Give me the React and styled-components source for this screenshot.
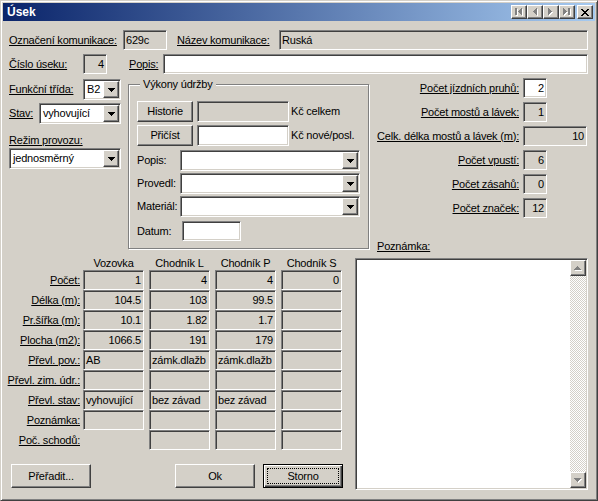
import React from 'react';
import styled, { createGlobalStyle, css } from 'styled-components';

const FACE = '#d4d0c8';
const SHADOW = '#808080';
const DARK = '#404040';

const GlobalStyle = createGlobalStyle`
  * { box-sizing: border-box; }
  html, body { margin: 0; padding: 0; background: ${FACE}; }
  body {
    font-family: "Liberation Sans", Arial, sans-serif;
    font-size: 11px;
    line-height: 13px;
    letter-spacing: -0.2px;
    color: #000;
  }
`;

const sunken = css`
  border: 1px solid;
  border-color: ${SHADOW} #fff #fff ${SHADOW};
  box-shadow: inset 1px 1px ${DARK}, inset -1px -1px ${FACE};
`;

const raised = css`
  border: 1px solid;
  border-color: #fff ${DARK} ${DARK} #fff;
  box-shadow: inset -1px -1px ${SHADOW};
`;

const Window = styled.div`
  width: 598px;
  height: 501px;
  background: ${FACE};
  border: 1px solid;
  border-color: ${FACE} ${DARK} ${DARK} ${FACE};
  box-shadow: inset 1px 1px #fff, inset -1px -1px ${SHADOW};
  padding: 2px;
  display: flex;
  flex-direction: column;
`;

const TitleBar = styled.div`
  height: 18px;
  flex: none;
  display: flex;
  align-items: center;
  padding: 0 2px;
  background: linear-gradient(to right, #0a246a, #a6caf0);
`;

const Title = styled.span`
  flex: 1;
  color: #fff;
  font-weight: bold;
  font-size: 12px;
  letter-spacing: 0;
  padding-left: 2px;
`;

const TitleButton = styled.span`
  ${raised};
  width: 16px;
  height: 14px;
  background: ${FACE};
  display: flex;
  align-items: center;
  justify-content: center;
  margin-left: ${(p) => p.$gap || 0}px;
`;

const Body = styled.div`
  flex: 1;
  display: flex;
  flex-direction: column;
  padding: 9px 7px 8px 6px;
  min-height: 0;
`;

const Row = styled.div`
  display: flex;
  align-items: center;
  flex: none;
  height: ${(p) => p.$h || 20}px;
  margin-top: ${(p) => p.$mt || 0}px;
`;

const Label = styled.span`
  flex: none;
  display: ${(p) => (p.$block ? 'block' : 'inline')};
  width: ${(p) => (p.$w ? `${p.$w}px` : 'auto')};
  margin-left: ${(p) => p.$ml || 0}px;
  margin-top: ${(p) => p.$mt || 0}px;
  text-decoration: ${(p) => (p.$u ? 'underline' : 'none')};
  white-space: nowrap;
`;

const Field = styled.div`
  ${sunken};
  flex: ${(p) => (p.$grow ? '1' : 'none')};
  width: ${(p) => (p.$w ? `${p.$w}px` : 'auto')};
  height: ${(p) => p.$h || 20}px;
  margin-left: ${(p) => p.$ml || 0}px;
  background: ${(p) => (p.$white ? '#fff' : FACE)};
  display: flex;
  align-items: center;
  justify-content: ${(p) => (p.$right ? 'flex-end' : 'flex-start')};
  padding: 0 2px;
  white-space: nowrap;
  overflow: hidden;
`;

const Combo = styled.div`
  ${sunken};
  flex: none;
  width: ${(p) => (p.$w ? `${p.$w}px` : '100%')};
  height: ${(p) => p.$h || 21}px;
  margin-top: ${(p) => p.$mt || 0}px;
  background: #fff;
  padding: 1px;
  display: flex;
`;

const ComboText = styled.span`
  flex: 1;
  display: flex;
  align-items: center;
  padding-left: 2px;
  overflow: hidden;
  white-space: nowrap;
`;

const DropButton = styled.span`
  ${raised};
  width: 16px;
  flex: none;
  background: ${FACE};
  display: flex;
  align-items: center;
  justify-content: center;
`;

const Button = styled.div`
  ${raised};
  flex: none;
  width: ${(p) => p.$w || 80}px;
  height: ${(p) => p.$h || 24}px;
  margin-left: ${(p) => (p.$auto ? 'auto' : `${p.$ml || 0}px`)};
  background: ${FACE};
  display: flex;
  align-items: center;
  justify-content: center;
  white-space: nowrap;
`;

const DefaultButton = styled.div`
  flex: none;
  width: 80px;
  height: 24px;
  margin-left: ${(p) => p.$ml || 0}px;
  background: ${FACE};
  border: 1px solid #000;
  box-shadow: inset 1px 1px #fff, inset -1px -1px ${DARK}, inset -2px -2px ${SHADOW};
  padding: 3px;
  display: flex;
`;

const FocusRect = styled.span`
  flex: 1;
  border: 1px dotted #000;
  display: flex;
  align-items: center;
  justify-content: center;
`;

const Middle = styled.div`
  display: flex;
  align-items: flex-start;
  height: 175px;
  flex: none;
  margin-top: 4px;
`;

const LeftCol = styled.div`
  width: 112px;
  flex: none;
  display: flex;
  flex-direction: column;
`;

const GroupBox = styled.div`
  position: relative;
  flex: none;
  width: 241px;
  height: 165px;
  margin: 6px 0 0 7px;
  border: 1px solid ${SHADOW};
  box-shadow: inset 1px 1px #fff, 1px 1px #fff;
  padding: 16px 8px 0 8px;
  display: flex;
  flex-direction: column;
`;

const Legend = styled.span`
  position: absolute;
  top: -7px;
  left: 11px;
  padding: 0 3px;
  background: ${FACE};
  white-space: nowrap;
`;

const RightCol = styled.div`
  flex: 1;
  align-self: stretch;
  display: flex;
  flex-direction: column;
`;

const RightGrid = styled.div`
  display: grid;
  grid-template-columns: 1fr 65px;
  column-gap: 4px;
  row-gap: 4px;
  align-items: center;
`;

const RightLabel = styled.span`
  text-align: right;
  text-decoration: underline;
  white-space: nowrap;
`;

const NoteLabel = styled.span`
  margin-top: auto;
  margin-left: 8px;
  text-decoration: underline;
`;

const Bottom = styled.div`
  flex: 1;
  display: flex;
  min-height: 0;
`;

const LeftBottom = styled.div`
  width: 334px;
  flex: none;
  display: flex;
  flex-direction: column;
`;

const TableGrid = styled.div`
  display: grid;
  grid-template-columns: 69px repeat(4, 61px);
  grid-template-rows: 17px repeat(9, 20px);
  column-gap: 5px;
`;

const HeadCell = styled.div`
  align-self: end;
  text-align: center;
  white-space: nowrap;
`;

const RowLabel = styled.div`
  display: flex;
  align-items: center;
  justify-content: flex-end;
  margin-right: -2px;
  white-space: nowrap;
`;

const ButtonRow = styled.div`
  display: flex;
  margin-top: 14px;
  padding-left: 2px;
`;

const NoteBox = styled.div`
  ${sunken};
  flex: 1;
  margin: 5px 0 0 12px;
  background: #fff;
  padding: 1px;
  display: flex;
  justify-content: flex-end;
`;

const ScrollBar = styled.div`
  width: 16px;
  display: flex;
  flex-direction: column;
  background: repeating-conic-gradient(#fff 0 25%, ${FACE} 0 50%) 0 0 / 2px 2px;
`;

const ScrollButton = styled.div`
  ${raised};
  height: 16px;
  flex: none;
  background: ${FACE};
  display: flex;
  align-items: center;
  justify-content: center;
`;

const ScrollTrack = styled.div`
  flex: 1;
`;

/* ---------- icons ---------- */

const DownArrow = () => (
  <svg width="7" height="4" viewBox="0 0 7 4" shapeRendering="crispEdges">
    <path d="M0 0h7v1H0z M1 1h5v1H1z M2 2h3v1H2z M3 3h1v1H3z" fill="#000" />
  </svg>
);

const GrayArrow = ({ up }) => {
  const d = up
    ? 'M3 0h1v1H3z M2 1h3v1H2z M1 2h5v1H1z M0 3h7v1H0z'
    : 'M0 0h7v1H0z M1 1h5v1H1z M2 2h3v1H2z M3 3h1v1H3z';
  return (
    <svg width="8" height="5" viewBox="0 0 8 5" shapeRendering="crispEdges">
      <path d={d} fill="#fff" transform="translate(1 1)" />
      <path d={d} fill={SHADOW} />
    </svg>
  );
};

const NAV = {
  first: 'M1 0h2v7H1z M7 0h1v7H7z M6 1h1v5H6z M5 2h1v3H5z M4 3h1v1H4z',
  prev: 'M6 0h1v7H6z M5 1h1v5H5z M4 2h1v3H4z M3 3h1v1H3z',
  next: 'M2 0h1v7H2z M3 1h1v5H3z M4 2h1v3H4z M5 3h1v1H5z',
  last: 'M1 0h1v7H1z M2 1h1v5H2z M3 2h1v3H3z M4 3h1v1H4z M6 0h2v7H6z',
};

const NavIcon = ({ kind }) => (
  <svg width="10" height="8" viewBox="0 0 10 8" shapeRendering="crispEdges">
    <path d={NAV[kind]} fill="#fff" transform="translate(1 1)" />
    <path d={NAV[kind]} fill={SHADOW} />
  </svg>
);

const CloseIcon = () => (
  <svg width="8" height="7" viewBox="0 0 8 7" shapeRendering="crispEdges">
    <path
      d="M0 0h2v1H0z M6 0h2v1H6z M1 1h2v1H1z M5 1h2v1H5z M2 2h4v1H2z M3 3h2v1H3z M2 4h4v1H2z M1 5h2v1H1z M5 5h2v1H5z M0 6h2v1H0z M6 6h2v1H6z"
      fill="#000"
    />
  </svg>
);

const ComboBox = ({ w, h, mt, value }) => (
  <Combo $w={w} $h={h} $mt={mt}>
    <ComboText>{value}</ComboText>
    <DropButton>
      <DownArrow />
    </DropButton>
  </Combo>
);

/* ---------- data ---------- */

const rightFields = [
  { label: 'Počet jízdních pruhů:', value: '2', w: 24, white: true },
  { label: 'Počet mostů a lávek:', value: '1', w: 24 },
  { label: 'Celk. délka mostů a lávek (m):', value: '10', w: 64 },
  { label: 'Počet vpustí:', value: '6', w: 24 },
  { label: 'Počet zásahů:', value: '0', w: 24 },
  { label: 'Počet značek:', value: '12', w: 24 },
];

const tableRows = [
  { label: 'Počet:', cells: ['1', '4', '4', '0'], right: true },
  { label: 'Délka (m):', cells: ['104.5', '103', '99.5', ''], right: true },
  { label: 'Pr.šířka (m):', cells: ['10.1', '1.82', '1.7', ''], right: true },
  { label: 'Plocha (m2):', cells: ['1066.5', '191', '179', ''], right: true },
  { label: 'Převl. pov.:', cells: ['AB', 'zámk.dlažb', 'zámk.dlažb', ''] },
  { label: 'Převl. zim. údr.:', cells: ['', '', '', ''] },
  { label: 'Převl. stav:', cells: ['vyhovující', 'bez závad', 'bez závad', ''] },
  { label: 'Poznámka:', cells: ['', '', '', ''] },
  { label: 'Poč. schodů:', cells: [null, '', '', ''] },
];

const headers = ['Vozovka', 'Chodník L', 'Chodník P', 'Chodník S'];

export default function App() {
  return (
    <>
      <GlobalStyle />
      <Window>
        <TitleBar>
          <Title>Úsek</Title>
          <TitleButton><NavIcon kind="first" /></TitleButton>
          <TitleButton><NavIcon kind="prev" /></TitleButton>
          <TitleButton><NavIcon kind="next" /></TitleButton>
          <TitleButton><NavIcon kind="last" /></TitleButton>
          <TitleButton $gap={2}><CloseIcon /></TitleButton>
        </TitleBar>

        <Body>
          <Row>
            <Label $u $w={114}>Označení komunikace:</Label>
            <Field $w={44}>629c</Field>
            <Label $u $w={102} $ml={10}>Název komunikace:</Label>
            <Field $grow>Ruská</Field>
          </Row>
          <Row $mt={4}>
            <Label $u $w={74}>Číslo úseku:</Label>
            <Field $w={24} $right>4</Field>
            <Label $u $w={34} $ml={22}>Popis:</Label>
            <Field $grow $white />
          </Row>

          <Middle>
            <LeftCol>
              <Row $h={21} $mt={1}>
                <Label $u $w={74}>Funkční třída:</Label>
                <ComboBox w={38} value="B2" />
              </Row>
              <Row $h={21} $mt={3}>
                <Label $u $w={30}>Stav:</Label>
                <ComboBox w={82} value="vyhovující" />
              </Row>
              <Label $u $block $mt={10}>Režim provozu:</Label>
              <ComboBox mt={1} value="jednosměrný" />
            </LeftCol>

            <GroupBox>
              <Legend>Výkony údržby</Legend>
              <Row $h={21}>
                <Button $w={56} $h={21}>Historie</Button>
                <Field $w={92} $h={21} $ml={4} />
                <Label $ml={2}>Kč celkem</Label>
              </Row>
              <Row $h={21} $mt={3}>
                <Button $w={56} $h={21}>Přičíst</Button>
                <Field $w={92} $h={21} $ml={4} $white />
                <Label $ml={2}>Kč nové/posl.</Label>
              </Row>
              <Row $h={21} $mt={4}>
                <Label $w={43}>Popis:</Label>
                <ComboBox w={180} value="" />
              </Row>
              <Row $h={21} $mt={2}>
                <Label $w={43}>Provedl:</Label>
                <ComboBox w={180} value="" />
              </Row>
              <Row $h={21} $mt={2}>
                <Label $w={43}>Materiál:</Label>
                <ComboBox w={180} value="" />
              </Row>
              <Row $h={20} $mt={4}>
                <Label $w={45}>Datum:</Label>
                <Field $w={59} $white />
              </Row>
            </GroupBox>

            <RightCol>
              <RightGrid>
                {rightFields.map((f) => (
                  <React.Fragment key={f.label}>
                    <RightLabel>{f.label}</RightLabel>
                    <Field $w={f.w} $right $white={f.white}>{f.value}</Field>
                  </React.Fragment>
                ))}
              </RightGrid>
              <NoteLabel>Poznámka:</NoteLabel>
            </RightCol>
          </Middle>

          <Bottom>
            <LeftBottom>
              <TableGrid>
                <span />
                {headers.map((h) => (
                  <HeadCell key={h}>{h}</HeadCell>
                ))}
                {tableRows.map((r) => (
                  <React.Fragment key={r.label}>
                    <RowLabel>
                      <Label $u>{r.label}</Label>
                    </RowLabel>
                    {r.cells.map((c, i) =>
                      c === null ? (
                        <span key={i} />
                      ) : (
                        <Field key={i} $right={r.right}>{c}</Field>
                      )
                    )}
                  </React.Fragment>
                ))}
              </TableGrid>
              <ButtonRow>
                <Button>Přeřadit...</Button>
                <Button $auto>Ok</Button>
                <DefaultButton $ml={8}>
                  <FocusRect>Storno</FocusRect>
                </DefaultButton>
              </ButtonRow>
            </LeftBottom>

            <NoteBox>
              <ScrollBar>
                <ScrollButton><GrayArrow up /></ScrollButton>
                <ScrollTrack />
                <ScrollButton><GrayArrow /></ScrollButton>
              </ScrollBar>
            </NoteBox>
          </Bottom>
        </Body>
      </Window>
    </>
  );
}
